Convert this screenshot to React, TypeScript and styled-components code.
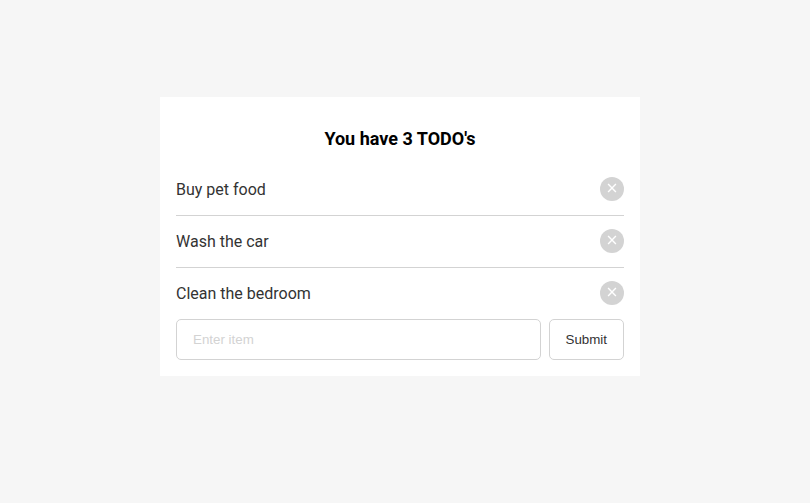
import React, { useState } from "react";
import styled, { createGlobalStyle } from "styled-components";

const GlobalStyle = createGlobalStyle`
  * { box-sizing: border-box; }
  body {
    margin: 0;
    background: #f6f6f6;
    color: #333;
    font-family: Roboto, sans-serif;
    font-size: 16px;
  }
`;

const Page = styled.main`
  display: flex;
  justify-content: center;
  width: 800px;
  padding-top: 97px;
`;

const Card = styled.section`
  width: 480px;
  height: 279px;
  padding: 16px;
  background: #fff;
`;

const Title = styled.h1`
  margin: 15px 0;
  color: #000;
  font-size: 18px;
  font-weight: 700;
  line-height: 21px;
  text-align: center;
`;

const List = styled.ul`
  margin: 0;
  padding: 0;
  list-style: none;
`;

const Item = styled.li`
  display: flex;
  align-items: center;
  justify-content: space-between;
  height: 52px;
  border-bottom: 1px solid #d3d3d3;

  &:last-child {
    height: 51px;
    border-bottom: 0;
  }
`;

const RemoveButton = styled.button`
  display: flex;
  align-items: center;
  justify-content: center;
  width: 24px;
  height: 24px;
  margin-bottom: 1px;
  padding: 0 0 2px;
  border: 0;
  border-radius: 50%;
  background: #d3d3d3;
  color: #fff;
`;

const Form = styled.form`
  display: flex;
  gap: 8px;
`;

const Field = styled.input`
  flex: 1;
  min-width: 0;
  height: 41px;
  padding: 0 16px;
  border: 1px solid #d3d3d3;
  border-radius: 5px;
  font: 13.333px "Liberation Sans", sans-serif;

  &::placeholder {
    color: #d3d3d3;
  }
`;

const SubmitButton = styled.button`
  height: 41px;
  padding: 0 16px;
  border: 1px solid #d3d3d3;
  border-radius: 5px;
  background: #fff;
  color: #333;
  font: 13.333px "Liberation Sans", sans-serif;
`;

export default function App() {
  const [items, setItems] = useState(["Buy pet food", "Wash the car", "Clean the bedroom"]);
  const [draft, setDraft] = useState("");

  const submit = (event: React.FormEvent) => {
    event.preventDefault();
    if (!draft.trim()) return;
    setItems([...items, draft.trim()]);
    setDraft("");
  };

  return (
    <>
      <GlobalStyle />
      <Page>
        <Card>
          <Title>You have {items.length} TODO's</Title>
          <List>
            {items.map((item, index) => (
              <Item key={index}>
                <span>{item}</span>
                <RemoveButton aria-label="Remove" onClick={() => setItems(items.filter((_, i) => i !== index))}>
                  <svg width="10" height="10" viewBox="0 0 10 10" stroke="currentColor" strokeWidth="1.4">
                    <path d="M1.1 1.1L8.9 8.9M8.9 1.1L1.1 8.9" />
                  </svg>
                </RemoveButton>
              </Item>
            ))}
          </List>
          <Form onSubmit={submit}>
            <Field placeholder="Enter item" value={draft} onChange={(e) => setDraft(e.target.value)} />
            <SubmitButton type="submit">Submit</SubmitButton>
          </Form>
        </Card>
      </Page>
    </>
  );
}
